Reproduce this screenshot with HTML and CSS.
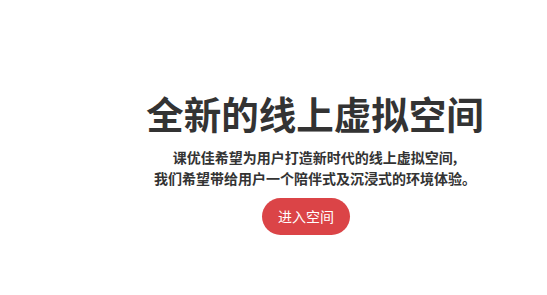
FILE: index.html
```html
<!DOCTYPE html>
<html lang="zh-CN">
<head>
<meta charset="utf-8">
<title>全新的线上虚拟空间</title>
<link rel="stylesheet" href="styles.css">
</head>
<body>
<main class="hero">
  <h1 class="hero-title">全新的线上虚拟空间</h1>
  <p class="hero-text">课优佳希望为用户打造新时代的线上虚拟空间,<br>我们希望带给用户一个陪伴式及沉浸式的环境体验。</p>
  <a class="hero-btn" href="#">进入空间</a>
</main>
</body>
</html>
```

FILE: styles.css
```css
html, body {
  margin: 0;
  padding: 0;
  background: #ffffff;
}
body {
  font-family: "Noto Sans CJK SC", "Noto Sans", sans-serif;
  color: #333333;
}
.hero {
  display: flex;
  flex-direction: column;
  align-items: center;
  padding: 91px 0 0 83px;
  text-align: center;
}
.hero-title {
  margin: 0;
  font-size: 37.5px;
  line-height: 44px;
  font-weight: 700;
  color: #333333;
}
.hero-text {
  margin: 12px 0 0;
  font-size: 14px;
  line-height: 21px;
  font-weight: 700;
  color: #333333;
}
.hero-btn {
  display: block;
  margin: 9px 18px 0 0;
  height: 37px;
  line-height: 37px;
  padding: 0 16px;
  border-radius: 19px;
  background: #db4447;
  color: #ffffff;
  font-size: 14px;
  text-decoration: none;
}
```
